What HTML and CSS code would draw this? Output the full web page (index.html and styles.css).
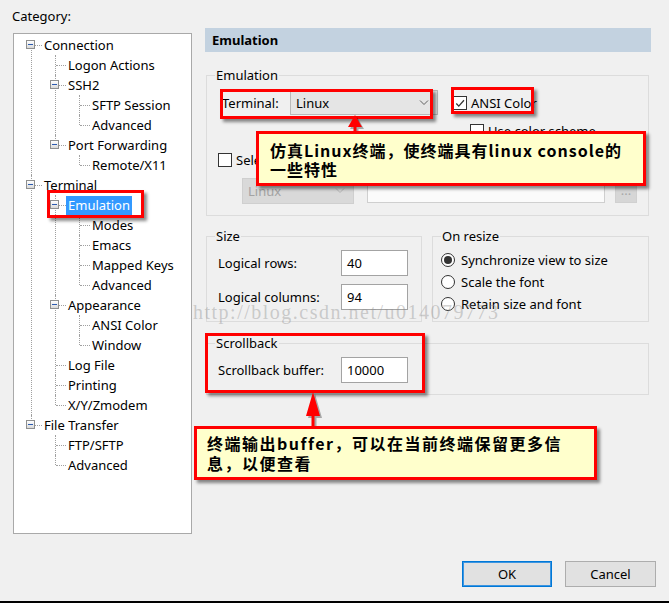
FILE: index.html
```html
<!DOCTYPE html>
<html lang="zh-CN">
<head>
  <meta charset="UTF-8">
  <title>Session Options - Emulation</title>
  <link rel="stylesheet" href="styles.css">
</head>
<body>
<div class="dialog">

  <div class="category">
    <div class="cat-label">Category:</div>
    <div class="tree-box">
      <ul class="tree">
        <li><div class="node"><span class="tog"></span><span class="txt">Connection</span></div>
          <ul>
            <li><div class="node"><span class="txt">Logon Actions</span></div></li>
            <li><div class="node"><span class="tog"></span><span class="txt">SSH2</span></div>
              <ul>
                <li><div class="node"><span class="txt">SFTP Session</span></div></li>
                <li><div class="node"><span class="txt">Advanced</span></div></li>
              </ul>
            </li>
            <li><div class="node"><span class="tog"></span><span class="txt">Port Forwarding</span></div>
              <ul>
                <li><div class="node"><span class="txt">Remote/X11</span></div></li>
              </ul>
            </li>
          </ul>
        </li>
        <li><div class="node"><span class="tog"></span><span class="txt">Terminal</span></div>
          <ul>
            <li><div class="node sel"><span class="tog"></span><span class="txt">Emulation</span></div>
              <ul>
                <li><div class="node"><span class="txt">Modes</span></div></li>
                <li><div class="node"><span class="txt">Emacs</span></div></li>
                <li><div class="node"><span class="txt">Mapped Keys</span></div></li>
                <li><div class="node"><span class="txt">Advanced</span></div></li>
              </ul>
            </li>
            <li><div class="node"><span class="tog"></span><span class="txt">Appearance</span></div>
              <ul>
                <li><div class="node"><span class="txt">ANSI Color</span></div></li>
                <li><div class="node"><span class="txt">Window</span></div></li>
              </ul>
            </li>
            <li><div class="node"><span class="txt">Log File</span></div></li>
            <li><div class="node"><span class="txt">Printing</span></div></li>
            <li><div class="node"><span class="txt">X/Y/Zmodem</span></div></li>
          </ul>
        </li>
        <li><div class="node"><span class="tog"></span><span class="txt">File Transfer</span></div>
          <ul>
            <li><div class="node"><span class="txt">FTP/SFTP</span></div></li>
            <li><div class="node"><span class="txt">Advanced</span></div></li>
          </ul>
        </li>
      </ul>
    </div>
  </div>

  <div class="panel">
    <div class="hdr">Emulation</div>

    <fieldset class="grp emu">
      <legend>Emulation</legend>
      <div class="term-row">
        <span class="term-label">Terminal:</span>
        <div class="combo">
          <span>Linux</span>
          <svg class="chev" width="10" height="6" viewBox="0 0 10 6"><path d="M1 0.5 L5 4.5 L9 0.5" fill="none" stroke="#606060" stroke-width="1"/></svg>
        </div>
        <span class="chk on"><svg width="13" height="13" viewBox="0 0 13 13"><path d="M2.5 6.5 L5.2 9.3 L10.8 3" fill="none" stroke="#333" stroke-width="1.4"/></svg></span>
        <span class="chk-text">ANSI Color</span>
      </div>
      <div class="scheme-row">
        <span class="chk"></span>
        <span class="chk-text">Use color scheme</span>
      </div>
      <div class="select-row">
        <span class="chk"></span>
        <span class="chk-text">Select an alternate keyboard emulation</span>
      </div>
      <div class="alt-row">
        <div class="combo off">
          <span>Linux</span>
          <svg class="chev" width="10" height="6" viewBox="0 0 10 6"><path d="M1 0.5 L5 4.5 L9 0.5" fill="none" stroke="#b4b4b4" stroke-width="1"/></svg>
        </div>
        <div class="edit off"></div>
        <div class="dots">...</div>
      </div>
    </fieldset>

    <div class="pair">
      <fieldset class="grp size">
        <legend>Size</legend>
        <div class="field-row"><span class="flabel">Logical rows:</span><div class="num">40</div></div>
        <div class="field-row"><span class="flabel">Logical columns:</span><div class="num">94</div></div>
      </fieldset>
      <fieldset class="grp resize">
        <legend>On resize</legend>
        <div class="radio-row"><span class="radio on"></span>Synchronize view to size</div>
        <div class="radio-row"><span class="radio"></span>Scale the font</div>
        <div class="radio-row"><span class="radio"></span>Retain size and font</div>
      </fieldset>
    </div>

    <fieldset class="grp scroll">
      <legend>Scrollback</legend>
      <div class="field-row"><span class="flabel">Scrollback buffer:</span><div class="num">10000</div></div>
    </fieldset>

    <div class="buttons">
      <button class="btn default">OK</button>
      <button class="btn">Cancel</button>
    </div>
  </div>

  <!-- annotations drawn on top of the screenshot -->
  <div class="watermark">http://blog.csdn.net/u014079773</div>
  <div class="mark m-emu"></div>
  <div class="mark m-term"></div>
  <div class="mark m-ansi"></div>
  <div class="mark m-scroll"></div>

  <svg class="arrow a1" width="18" height="20" viewBox="0 0 18 20">
    <path d="M10 3 L17 15 L11.5 15 L11.5 20 L8.5 20 L8.5 15 L3 15 Z" fill="#000" opacity="0.3"/>
    <path d="M8 1 L15 13 L9.5 13 L9.5 18 L6.5 18 L6.5 13 L1 13 Z" fill="#f00"/>
  </svg>
  <svg class="arrow a2" width="18" height="38" viewBox="0 0 18 38">
    <path d="M10 3 L17 27 L11.5 27 L11.5 38 L8.5 38 L8.5 27 L3 27 Z" fill="#000" opacity="0.3"/>
    <path d="M8 1 L15 25 L9.5 25 L9.5 36 L6.5 36 L6.5 25 L1 25 Z" fill="#f00"/>
  </svg>

  <div class="note n1">仿真Linux终端，使终端具有linux console的<br>一些特性</div>
  <div class="note n2">终端输出buffer，可以在当前终端保留更多信<br>息，以便查看</div>
</div>
</body>
</html>
```

FILE: styles.css
```css
html, body {
  margin: 0;
  padding: 0;
}
body {
  font-family: 'Noto Sans', 'Liberation Sans', sans-serif;
  font-size: 13px;
  line-height: 16px;
  color: #000;
  background-color: #f0f0f0;
}
.dialog {
  position: relative;
  width: 669px;
  height: 601px;
  border-bottom: 2px solid #000;
  display: flex;
  overflow: hidden;
}

/* left: category tree */
.category {
  width: 179px;
  margin-left: 13px;
  padding-top: 7px;
}
.cat-label {
  height: 26px;
  line-height: 18px;
  margin-left: -1px;
}
.tree-box {
  box-sizing: border-box;
  height: 501px;
  border: 1px solid #a9a9a9;
  background: #fff;
}
.tree, .tree ul {
  list-style: none;
  margin: 0;
  padding: 0;
}
.tree {
  padding: 1px 0 0 12px;
}
.tree ul {
  margin-left: 24px;
}
.tree li {
  position: relative;
}
.tree li::before {
  content: '';
  position: absolute;
  left: 5px;
  top: 0;
  bottom: 0;
  border-left: 1px dotted #a0a0a0;
}
.tree li:last-child::before {
  bottom: auto;
  height: 10px;
}
.tree > li:first-child::before {
  top: 10px;
}
.node {
  position: relative;
  height: 20px;
  display: flex;
  align-items: center;
}
.node::before {
  content: '';
  position: absolute;
  left: 6px;
  top: 10px;
  width: 10px;
  border-top: 1px dotted #a0a0a0;
}
.tog {
  position: absolute;
  left: 0;
  top: 5px;
  width: 9px;
  height: 9px;
  box-sizing: border-box;
  border: 1px solid #8e8f8f;
  background: linear-gradient(#ffffff, #d9d9d9);
  z-index: 1;
}
.tog::after {
  content: '';
  position: absolute;
  left: 1px;
  top: 3px;
  width: 5px;
  height: 1px;
  background: #2c5bb0;
}
.txt {
  margin-left: 16px;
  padding: 1px 2px;
  line-height: 17px;
  white-space: nowrap;
  position: relative;
  z-index: 1;
}
.sel .txt {
  background: #3399ff;
  color: #fff;
}

/* right: options panel */
.panel {
  width: 446px;
  margin-left: 13px;
  padding-top: 28px;
  display: flex;
  flex-direction: column;
}
.hdr {
  height: 24px;
  line-height: 24px;
  padding-left: 7px;
  background: #c3d2e0;
  font-size: 13px;
  font-weight: bold;
}
.grp {
  margin: 0;
  padding: 0;
  min-width: 0;
  border: 1px solid #dcdcdc;
}
.grp legend {
  margin-left: 8px;
  padding: 0 1px;
  line-height: 16px;
}
.emu {
  margin: 15px 2px 0 1px;
  padding: 0 0 11px 15px;
}
.emu legend {
  margin-left: -7px;
}
.term-row {
  margin-top: 7px;
  height: 25px;
  display: flex;
  align-items: center;
}
.term-label {
  width: 68px;
}
.combo {
  box-sizing: border-box;
  width: 148px;
  height: 25px;
  padding: 0 8px 0 5px;
  border: 1px solid #b9b9b9;
  background: #e5e5e5;
  display: flex;
  align-items: center;
  justify-content: space-between;
}
.combo.off {
  width: 112px;
  height: 26px;
  border-color: #cfcfcf;
  background: #d9d9d9;
  color: #a3a3a3;
}
.chk {
  box-sizing: border-box;
  width: 14px;
  height: 14px;
  border: 1px solid #333;
  background: #fff;
  flex: none;
  display: flex;
}
.term-row .chk {
  margin-left: 15px;
}
.chk-text {
  margin-left: 4px;
  white-space: nowrap;
}
.scheme-row {
  margin: 8px 0 0 248px;
  display: flex;
  align-items: center;
}
.select-row {
  margin: 13px 0 0 -4px;
  display: flex;
  align-items: center;
}
.alt-row {
  margin: 10px 0 0 20px;
  display: flex;
  align-items: flex-start;
}
.edit {
  box-sizing: border-box;
  width: 238px;
  height: 25px;
  margin-left: 13px;
  border: 1px solid #cfcfcf;
  background: #fbfbfb;
}
.dots {
  box-sizing: border-box;
  width: 22px;
  height: 21px;
  margin: 4px 0 0 10px;
  background: #d6d6d6;
  border: 1px solid #d0d0d0;
  color: #a8a8a8;
  text-align: center;
  line-height: 14px;
}

.pair {
  margin: 12px 2px 0 1px;
  display: flex;
  gap: 10px;
}
.size {
  width: 216px;
  box-sizing: border-box;
  padding: 6px 0 12px 11px;
}
.size legend,
.scroll legend {
  margin-left: -3px;
}
.resize {
  flex: 1;
  padding: 5px 0 6px 8px;
}
.resize legend {
  margin-left: 0;
}
.field-row {
  height: 25px;
  display: flex;
  align-items: center;
}
.field-row + .field-row {
  margin-top: 9px;
}
.flabel {
  width: 123px;
}
.num {
  box-sizing: border-box;
  width: 67px;
  height: 26px;
  padding-left: 5px;
  border: 1px solid #a3a3a3;
  background: #fff;
  line-height: 24px;
}
.radio-row {
  height: 22px;
  display: flex;
  align-items: center;
  white-space: nowrap;
}
.radio {
  box-sizing: border-box;
  width: 14px;
  height: 14px;
  margin-right: 6px;
  border: 1px solid #333;
  border-radius: 50%;
  background: #fff;
  display: flex;
  align-items: center;
  justify-content: center;
}
.radio.on::after {
  content: '';
  width: 8px;
  height: 8px;
  border-radius: 50%;
  background: #333;
}
.scroll {
  margin: 13px 2px 0 1px;
  padding: 6px 0 12px 11px;
}
.buttons {
  margin: 166px -5px 0 0;
  display: flex;
  justify-content: flex-end;
  gap: 13px;
}
.btn {
  box-sizing: border-box;
  width: 91px;
  height: 26px;
  border: 1px solid #adadad;
  background: #e1e1e1;
  font-family: inherit;
  font-size: 13px;
  color: #000;
}
.btn.default {
  width: 90px;
  border-color: #0078d7;
  box-shadow: inset 0 0 0 1px #3d95e0;
}

/* annotations */
.watermark {
  position: absolute;
  left: 193px;
  top: 301px;
  font-family: 'Liberation Serif', serif;
  font-size: 20px;
  line-height: 23px;
  letter-spacing: 1.5px;
  color: rgba(140, 140, 140, 0.4);
  white-space: nowrap;
}
.mark {
  position: absolute;
  box-sizing: border-box;
  border: 3px solid #ff0000;
  box-shadow: 3px 3px 3px rgba(0, 0, 0, 0.45);
}
.m-emu { left: 47px; top: 190px; width: 97px; height: 28px; }
.m-term { left: 220px; top: 89px; width: 213px; height: 30px; }
.m-ansi { left: 451px; top: 87px; width: 83px; height: 27px; }
.m-scroll { left: 205px; top: 333px; width: 220px; height: 60px; }
.arrow {
  position: absolute;
}
.a1 { left: 347px; top: 114px; }
.a2 { left: 305px; top: 391px; }
.note {
  position: absolute;
  box-sizing: border-box;
  border: 3px solid #ff0000;
  background: #ffffcc;
  box-shadow: 3px 3px 3px rgba(0, 0, 0, 0.45);
  font-family: 'Noto Sans CJK SC', 'Noto Sans', sans-serif;
  font-size: 16px;
  font-weight: bold;
  white-space: nowrap;
}
.n1 {
  left: 256px;
  top: 131px;
  width: 390px;
  height: 55px;
  padding: 7px 0 0 11px;
  line-height: 19px;
  letter-spacing: 1px;
}
.n2 {
  left: 194px;
  top: 426px;
  width: 403px;
  height: 54px;
  padding: 4px 0 0 10px;
  line-height: 20px;
  letter-spacing: 1.5px;
}
```
